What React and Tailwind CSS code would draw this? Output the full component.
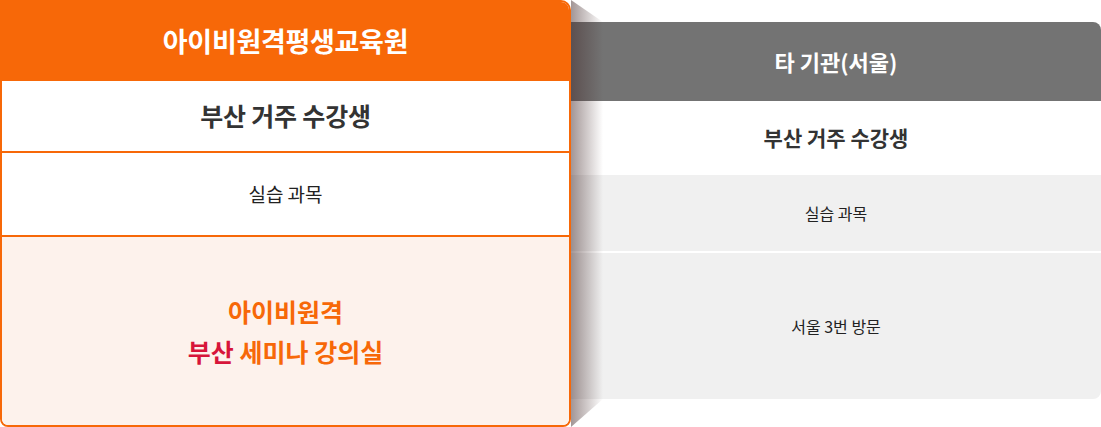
export default function App() {
  const font = { fontFamily: '"Noto Sans CJK KR", "Noto Sans", sans-serif' };

  return (
    <div className="w-[1101px] h-[427px] bg-white relative flex" style={font}>
      {/* left card: our institute */}
      <div className="w-[571px] h-full flex flex-col border-2 border-[#f76808] rounded-tr-[10px] rounded-b-[8px] overflow-hidden bg-white relative z-10">
        <div className="h-[79px] bg-[#f76808] flex items-center justify-center text-white text-[27px] font-bold tracking-[-0.3px]">
          아이비원격평생교육원
        </div>
        <div className="h-[72px] border-b-2 border-[#f76808] flex items-center justify-center text-[#333] text-[25px] font-bold tracking-[-0.2px]">
          부산 거주 수강생
        </div>
        <div className="h-[84px] border-b-2 border-[#f76808] flex items-center justify-center text-[#222] text-[19px]">
          실습 과목
        </div>
        <div className="flex-1 bg-[#fdf2ec] flex flex-col items-center justify-center text-[25px] font-bold leading-[40px] text-[#f76808]">
          <div>아이비원격</div>
          <div>
            <span className="text-[#d7153a]">부산</span> 세미나 강의실
          </div>
        </div>
      </div>

      {/* right card: other institute */}
      <div className="flex-1 mt-[22px] h-[377px] flex flex-col rounded-r-[8px] overflow-hidden">
        <div className="h-[79px] bg-[#737373] flex items-center justify-center text-white text-[22px] font-bold">
          타 기관(서울)
        </div>
        <div className="h-[74px] bg-white flex items-center justify-center text-[#333] text-[21px] font-bold">
          부산 거주 수강생
        </div>
        <div className="h-[78px] bg-[#f0f0f0] border-b-2 border-white flex items-center justify-center text-[#222] text-[16px]">
          실습 과목
        </div>
        <div className="flex-1 bg-[#f0f0f0] flex items-center justify-center text-[#222] text-[16px]">
          서울 3번 방문
        </div>
      </div>

      {/* folded shadow cast by the left card */}
      <div className="absolute left-[571px] top-0 w-[32px] h-full pointer-events-none bg-gradient-to-r from-[rgba(70,45,45,0.5)] to-[rgba(70,45,45,0)] [clip-path:polygon(0_0,100%_22px,100%_calc(100%-28px),0_100%)]" />
    </div>
  );
}
